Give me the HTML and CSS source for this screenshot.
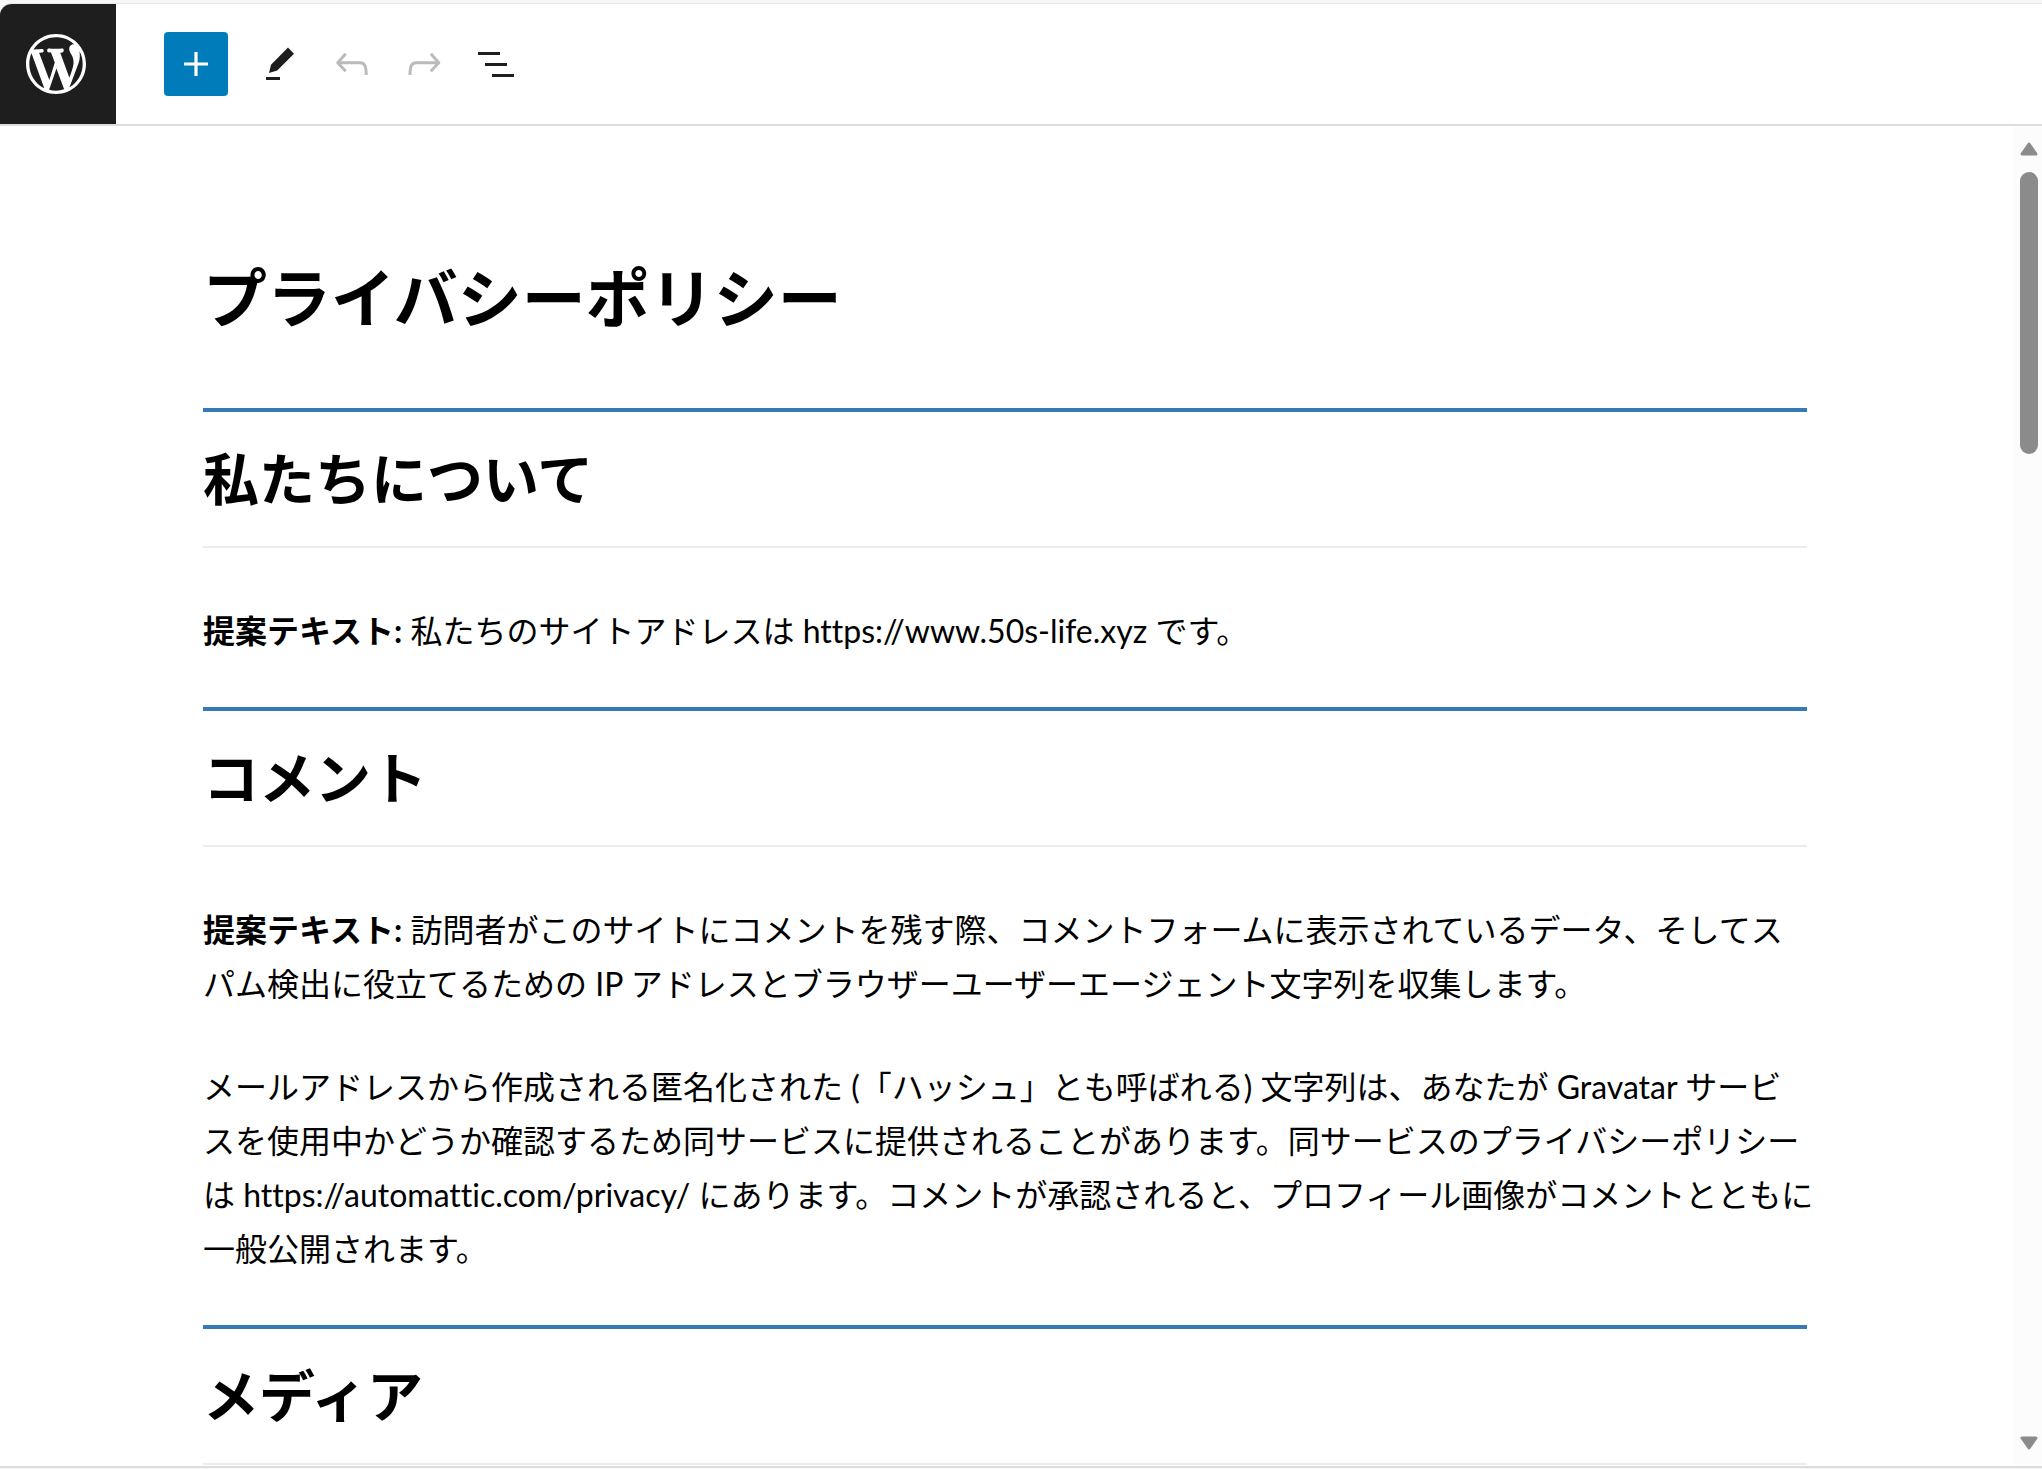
FILE: index.html
```html
<!DOCTYPE html>
<html lang="ja">
<head>
    <meta charset="UTF-8">
    <meta name="viewport" content="width=device-width, initial-scale=1">
    <title>プライバシーポリシー</title>
    <link rel="stylesheet" href="styles.css">
</head>
<body>
    <div class="editor">
        <header class="editor-header">
            <a class="site-logo" href="#" aria-label="WordPress">
                <svg viewBox="-2 -2 24 24"><path d="M20 10c0-5.51-4.49-10-10-10C4.48 0 0 4.49 0 10c0 5.52 4.48 10 10 10 5.51 0 10-4.48 10-10zM7.78 15.37L4.37 6.22c.55-.02 1.17-.08 1.17-.08.5-.06.44-1.13-.06-1.11 0 0-1.45.11-2.37.11-.18 0-.37 0-.58-.01C4.12 2.69 6.87 1.11 10 1.11c2.33 0 4.45.87 6.05 2.34-.68-.11-1.65.39-1.65 1.58 0 .74.45 1.36.9 2.1.35.61.55 1.36.55 2.46 0 1.49-1.4 5-1.4 5l-3.03-8.37c.54-.02.82-.17.82-.17.5-.05.44-1.25-.06-1.22 0 0-1.44.12-2.38.12-.87 0-2.33-.12-2.33-.12-.5-.03-.56 1.2-.06 1.22l.92.08 1.26 3.41zM17.41 10c.24-.64.74-1.87.43-4.25.7 1.29 1.05 2.71 1.05 4.25 0 3.29-1.73 6.24-4.4 7.78.97-2.59 1.94-5.2 2.92-7.78zM6.1 18.09C3.12 16.65 1.11 13.53 1.11 10c0-1.3.23-2.48.72-3.59C3.25 10.3 4.67 14.2 6.1 18.09zm4.03-6.63l2.58 6.98c-.86.29-1.76.45-2.71.45-.79 0-1.57-.11-2.29-.33.81-2.38 1.62-4.74 2.42-7.1z"/></svg>
            </a>
            <div class="toolbar">
                <button type="button" class="tool add-button" aria-label="ブロックを追加">
                    <svg viewBox="0 0 24 24"><path d="M18 11.2h-5.2V6h-1.6v5.2H6v1.6h5.2V18h1.6v-5.2H18z"/></svg>
                </button>
                <button type="button" class="tool" aria-label="ツール">
                    <svg viewBox="0 0 48 48"><path d="M32 7.5l6 6.2-16.8 16.8L13 33l2-8.2zM10 37h14v3H10z"/></svg>
                </button>
                <button type="button" class="tool" aria-label="元に戻す" disabled>
                    <svg viewBox="0 0 48 48"><path class="stroke" d="M17.7 13.7L9.7 22.7L17.7 31.3M9.7 22.7H32C37 22.7 38.2 27 38.2 35"/></svg>
                </button>
                <button type="button" class="tool" aria-label="やり直す" disabled>
                    <svg viewBox="0 0 48 48"><path class="stroke" d="M30.8 13.7L38.8 22.7L30.8 31.3M38.8 22.7H16.2C11.2 22.7 10 27 10 35"/></svg>
                </button>
                <button type="button" class="tool" aria-label="リスト表示">
                    <svg viewBox="0 0 24 24"><path d="M3 6h11v1.5H3zM6.5 11.5h11V13h-11zM10 17h11v1.5H10z"/></svg>
                </button>
            </div>
        </header>

        <div class="editor-body">
            <main class="content">
                <h1>プライバシーポリシー</h1>

                <h2>私たちについて</h2>
                <p><strong>提案テキスト:</strong> 私たちのサイトアドレスは https://www.50s-life.xyz です。</p>

                <h2>コメント</h2>
                <p><strong>提案テキスト:</strong> 訪問者がこのサイトにコメントを残す際、コメントフォームに表示されているデータ、そしてスパム検出に役立てるための IP アドレスとブラウザーユーザーエージェント文字列を収集します。</p>
                <p class="wide">メールアドレスから作成される匿名化された (「ハッシュ」とも呼ばれる) 文字列は、あなたが Gravatar サービ<br>スを使用中かどうか確認するため同サービスに提供されることがあります。同サービスのプライバシーポリシーは https://automattic.com/privacy/ にあります。コメントが承認されると、プロフィール画像がコメントとともに一般公開されます。</p>

                <h2>メディア</h2>
            </main>

            <div class="scrollbar">
                <svg class="arrow" viewBox="0 0 18 14"><path d="M9 2L16 12H2z"/></svg>
                <div class="thumb"></div>
                <svg class="arrow arrow-down" viewBox="0 0 18 14"><path d="M9 12L2 2h14z"/></svg>
            </div>
        </div>
    </div>
</body>
</html>
```

FILE: styles.css
```css
* {
    box-sizing: border-box;
}
body {
    margin: 0;
    background-color: #f6f6f6;
    color: #000;
    font-family: Lato, "Noto Sans CJK JP", sans-serif;
    font-variant-ligatures: none;
    text-spacing-trim: space-all; /* keep brackets full width */
    overflow: hidden;
}
.editor {
    display: flex;
    flex-direction: column;
    height: 100vh;
    padding-top: 3px;
}

/* Top bar */
.editor-header {
    display: flex;
    flex: none;
    height: 123px;
    border-top: 1px solid #e6e6e6;
    border-bottom: 2px solid #ddd;
    border-top-left-radius: 12px;
    background-color: #fff;
    overflow: hidden;
}
.site-logo {
    display: flex;
    align-items: center;
    width: 116px;
    padding-left: 20px;
    background-color: #1e1e1e;
}
.site-logo svg {
    width: 72px;
    height: 72px;
    fill: #fff;
}
.toolbar {
    display: flex;
    align-items: center;
    gap: 8px;
    padding-left: 48px;
}
.tool {
    display: flex;
    align-items: center;
    justify-content: center;
    width: 64px;
    height: 64px;
    padding: 0;
    border: none;
    border-radius: 4px;
    background: none;
    color: #1e1e1e;
    cursor: pointer;
}
.tool svg {
    width: 48px;
    height: 48px;
    fill: currentColor;
}
.tool .stroke {
    fill: none;
    stroke: currentColor;
    stroke-width: 3;
    stroke-linejoin: round;
}
.tool:disabled {
    color: #bbb;
    cursor: default;
}
.add-button {
    margin-right: 12px;
    background-color: #007cba;
    color: #fff;
}

/* Page being edited */
.editor-body {
    display: flex;
    flex: 1;
    min-height: 0;
    margin-bottom: 1px;
    border-bottom: 2px solid #ddd;
    background-color: #fff;
}
.content {
    flex: 1;
    padding: 124px 207px 0 203px;
    overflow: hidden;
}
h1 {
    margin: 0 0 62px;
    font-size: 64px;
    line-height: 96px;
}
h2 {
    margin: 0 0 56px;
    padding: 24px 0;
    border-top: 4px solid #337ab7;
    border-bottom: 2px solid #ececec;
    font-size: 56px;
    line-height: 86px;
}
p {
    margin: 0 0 49px;
    font-size: 32px;
    line-height: 54px;
}
.wide {
    margin-right: -8px;
}

/* Scrollbar */
.scrollbar {
    display: flex;
    flex-direction: column;
    align-items: center;
    width: 28px;
    padding: 16px 0 16px 2px;
    background-color: #fcfcfc;
}
.thumb {
    width: 18px;
    height: 282px;
    margin-top: 16px;
    border-radius: 9px;
    background-color: #8b8b8b;
}
.arrow {
    width: 18px;
    height: 14px;
    fill: #8b8b8b;
    stroke: #8b8b8b;
    stroke-width: 3;
    stroke-linejoin: round;
}
.arrow-down {
    margin-top: auto;
}
```
